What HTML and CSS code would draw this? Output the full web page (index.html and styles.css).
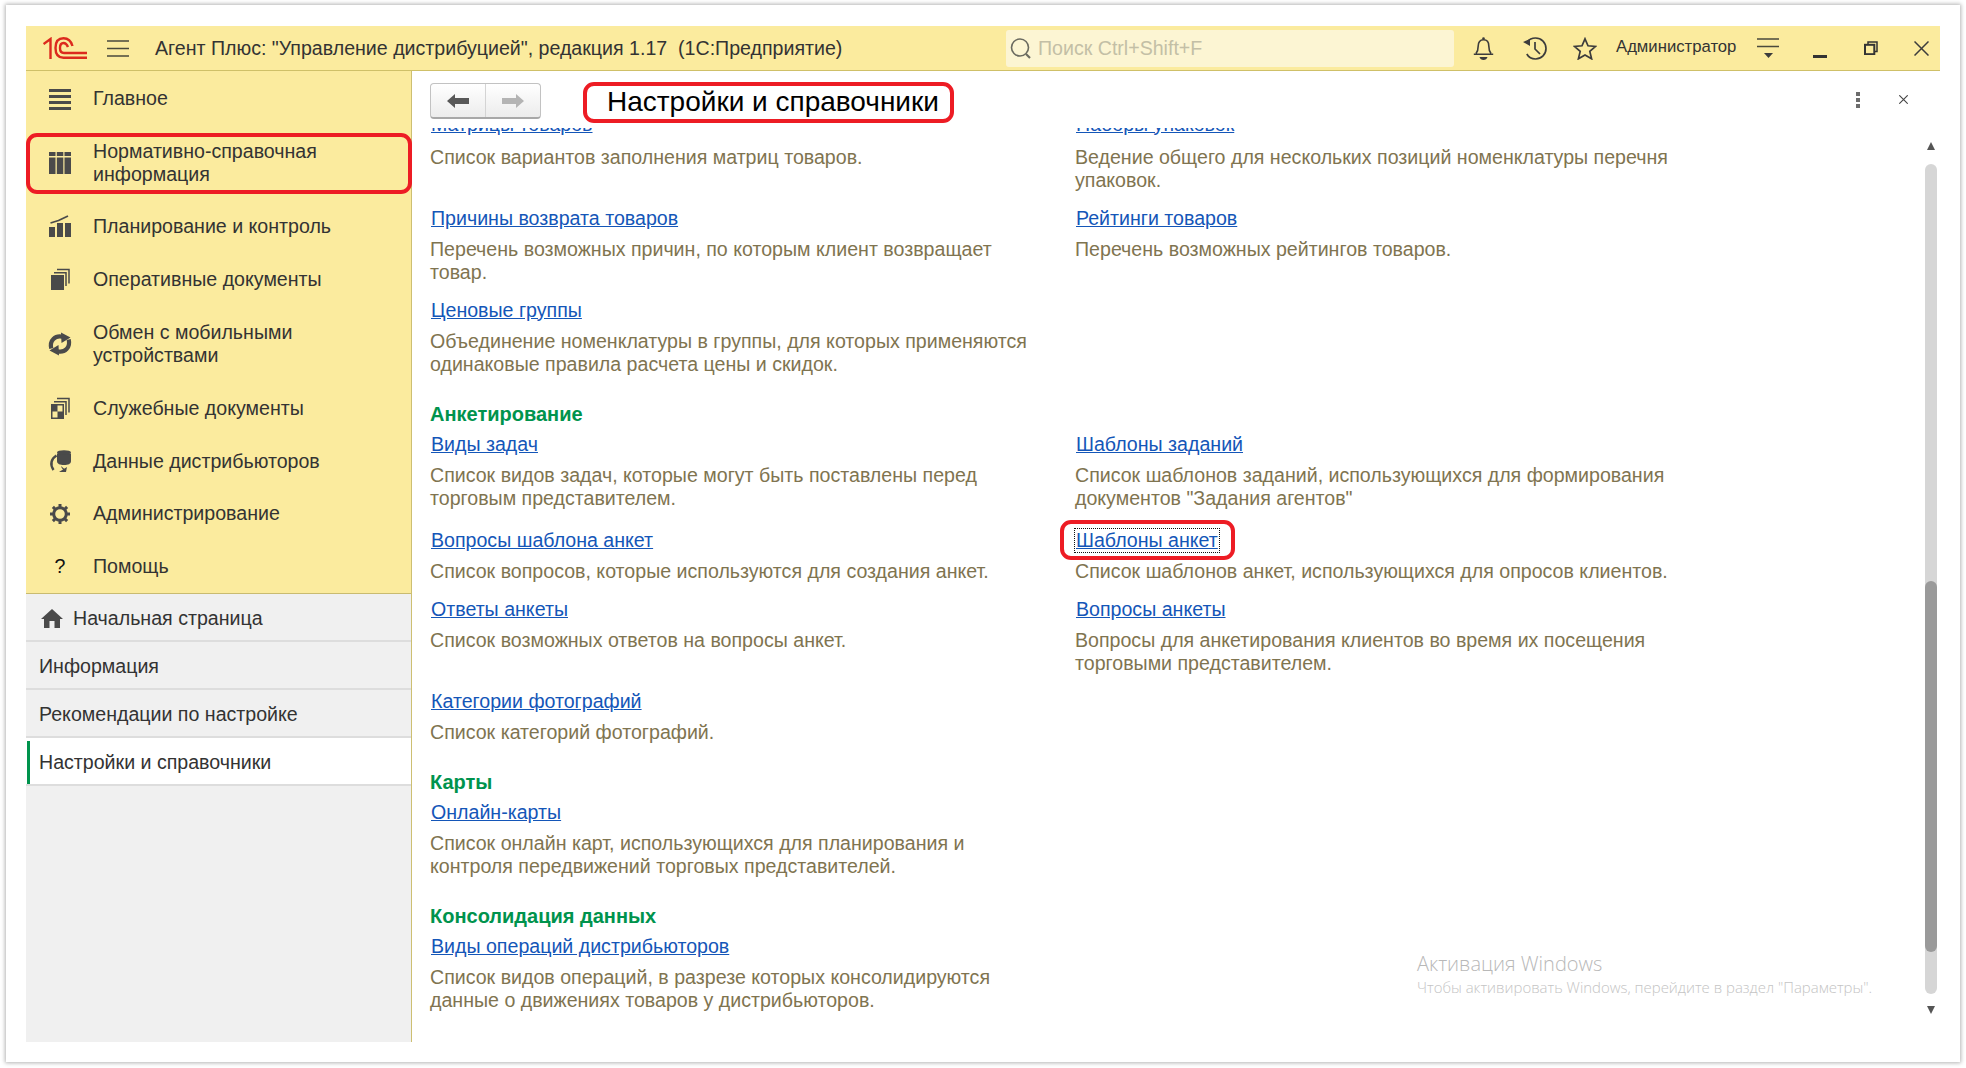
FILE: index.html
```html
<!DOCTYPE html>
<html lang="ru">
<head>
<meta charset="utf-8">
<title>Настройки и справочники</title>
<link rel="stylesheet" href="styles.css">
</head>
<body>
<div class="window">
  <div class="shell">
    <header class="appbar">
      <svg class="logo" viewBox="0 0 44 22"><g fill="none" stroke="#dc2a1e" stroke-width="2.4"><path d="M0.5 7 L7.5 2 V22"/><path d="M29.5 9 C28 3.500 25 1.200 20.500 1.200 C15 1.200 12.500 5 12.500 11 C12.500 17 15 20.800 20.500 20.800 H44"/><path d="M25 10 C24 7.500 22.500 6 20.500 6 C18 6 17 8 17 11 C17 14 18 16 21 16 H44"/></g></svg>
      <svg class="hamburger" viewBox="0 0 22 17"><path d="M0 1H22M0 8.500H22M0 16H22" stroke="#4a4a3c" stroke-width="1.500" fill="none"/></svg>
      <div class="app-title">Агент Плюс: "Управление дистрибуцией", редакция 1.17 &nbsp;(1С:Предприятие)</div>
      <div class="search">
        <svg class="search-icon" viewBox="0 0 22 21"><circle cx="10" cy="9.500" r="8.500" fill="none" stroke="#6b6b60" stroke-width="1.600"/><path d="M16 16L20 20" stroke="#6b6b60" stroke-width="2.200"/></svg>
        <span class="search-text">Поиск Ctrl+Shift+F</span>
      </div>
      <svg class="ic-bell" viewBox="0 0 21 23"><circle cx="10.500" cy="1.500" r="1.300" fill="#3c3c3c"/><path d="M3 16.500 C5 14 5.200 12 5.200 9 C5.200 5 7 2.800 10.500 2.800 C14 2.800 15.800 5 15.800 9 C15.800 12 16 14 18 16.500 M0.800 17.200 H20.200" fill="none" stroke="#3c3c3c" stroke-width="1.600"/><path d="M6.500 20 H14.500 C14 22 12.500 23 10.500 23 C8.500 23 7 22 6.500 20Z" fill="#3c3c3c"/></svg>
      <svg class="ic-history" viewBox="0 0 24 23"><path d="M4 5 C6 2.500 9 1 12.500 1 C18.500 1 23 5.700 23 11.500 C23 17.300 18.500 22 12.500 22 C8.500 22 5.500 20 3.800 17" fill="none" stroke="#3c3c3c" stroke-width="1.700"/><path d="M0 5 L7 2 L7 9Z" fill="#3c3c3c"/><path d="M12 5 V12 L17 17" fill="none" stroke="#3c3c3c" stroke-width="1.700"/></svg>
      <svg class="ic-star" viewBox="0 0 24 23"><path d="M12 1.800 L15 8.800 L22.600 9.400 L16.800 14.400 L18.600 21.800 L12 17.900 L5.400 21.800 L7.200 14.400 L1.400 9.400 L9 8.800Z" fill="none" stroke="#3c3c3c" stroke-width="1.700"/></svg>
      <span class="user">Администратор</span>
      <svg class="ic-filter" viewBox="0 0 22 20"><path d="M0 1H22M0 8.500H22" stroke="#4a4a3c" stroke-width="1.500" fill="none"/><path d="M7 15H16L11.500 20Z" fill="#3c3c3c"/></svg>
      <span class="ic-min"></span>
      <svg class="ic-restore" viewBox="0 0 14 14"><path d="M4 3.500V1H13V10.500H10.500" fill="none" stroke="#333" stroke-width="1.500"/><rect x="1" y="3.800" width="9.300" height="9.400" fill="none" stroke="#333" stroke-width="2"/></svg>
      <svg class="ic-close" viewBox="0 0 15 15"><path d="M0.500 0.500L14.500 14.500M14.500 0.500L0.500 14.500" stroke="#3c3c3c" stroke-width="1.500"/></svg>
    </header>
    <div class="main">
      <aside class="sidebar">
        <nav class="sections">
          <a class="section-item"><svg class="sec-icon" viewBox="0 0 22 22"><path d="M0 1h22v3H0zM0 7h22v3H0zM0 13h22v3H0zM0 19h22v3H0z"/></svg><span>Главное</span></a>
          <a class="section-item marked"><svg class="sec-icon" viewBox="0 0 22 22"><path d="M0 0h6.500v4H0zM0 5.500h6.500V22H0zM7.800 0h6.500v4H7.800zM7.800 5.500h6.500V22H7.800zM15.500 0H22v4h-6.500zM15.500 5.500H22V22h-6.500z"/></svg><span>Нормативно-справочная<br>информация</span></a>
          <a class="section-item"><svg class="sec-icon" viewBox="0 0 22 22"><path d="M0 12h6v10H0zM8 8h6v14H8zM16 8h6v14h-6z"/><path d="M1.500 8L9.500 5.500L19 1" fill="none" stroke="#4a4a4a" stroke-width="1.800"/></svg><span>Планирование и контроль</span></a>
          <a class="section-item"><svg class="sec-icon" viewBox="0 0 22 22"><path d="M2 7h13v15H2z"/><path d="M5 4.700H17V18M8 1.500H20V15.500" fill="none" stroke="#4a4a4a" stroke-width="1.500"/></svg><span>Оперативные документы</span></a>
          <a class="section-item section-tall"><svg class="sec-icon" viewBox="0 0 22 22"><path d="M2.300 15.500 C0.300 7.500 6 1.800 14 3.800 M19.700 6.500 C21.700 14.500 16 20.200 8 18.200" fill="none" stroke="#4a4a4a" stroke-width="4.200"/><path d="M12 -0.500L21.500 4.500L12.500 10ZM10 22.500L0.500 17.500L9.500 12Z"/></svg><span>Обмен с мобильными<br>устройствами</span></a>
          <a class="section-item"><svg class="sec-icon" viewBox="0 0 22 22"><path d="M2 7h13v15H2z"/><path d="M8.500 8.500h5v6h-5zM3.500 14.500h5v6h-5z" fill="#fbeb9e"/><path d="M5 4.700H17V18M8 1.500H20V15.500" fill="none" stroke="#4a4a4a" stroke-width="1.500"/></svg><span>Служебные документы</span></a>
          <a class="section-item"><svg class="sec-icon" viewBox="0 0 22 22"><path d="M8 3.500h14V11 C22 14 19 15 15 15 C11 15 8 14 8 11Z"/><ellipse cx="15" cy="2.500" rx="7" ry="2.300"/><path d="M7.500 5.500 C2.500 8.500 0.500 14 4.500 20" fill="none" stroke="#4a4a4a" stroke-width="2.400"/><path d="M12 16 C13 19 14 20 16 19.500 M10 22L17 22L18 17Z"/></svg><span>Данные дистрибьюторов</span></a>
          <a class="section-item"><svg class="sec-icon" viewBox="0 0 22 22"><circle cx="11" cy="11" r="6.300" fill="none" stroke="#4a4a4a" stroke-width="3"/><path d="M11 1V5M11 17V21M1 11H5M17 11H21M3.900 3.900L6.700 6.700M15.300 15.300L18.100 18.100M18.100 3.900L15.300 6.700M6.700 15.300L3.900 18.100" stroke="#4a4a4a" stroke-width="3"/></svg><span>Администрирование</span></a>
          <a class="section-item"><span class="sec-help">?</span><span>Помощь</span></a>
        </nav>
        <ul class="tabs">
          <li class="tab"><svg class="home-icon" viewBox="0 0 22 19"><path d="M11 0L22 10H19V19H13.500V12H8.500V19H3V10H0Z"/></svg>Начальная страница</li>
          <li class="tab">Информация</li>
          <li class="tab">Рекомендации по настройке</li>
          <li class="tab active">Настройки и справочники</li>
        </ul>
      </aside>
      <main class="page">
        <div class="toolbar">
          <div class="nav-buttons">
            <button class="nav-btn"><svg viewBox="0 0 22 14"><path d="M0 7L8 0V4H22V10H8V14Z" fill="#585858"/></svg></button>
            <button class="nav-btn"><svg viewBox="0 0 22 14"><path d="M22 7L14 0V4H0V10H14V14Z" fill="#b4b4b4"/></svg></button>
          </div>
          <h1 class="page-title">Настройки и справочники</h1>
          <svg class="ic-dots" viewBox="0 0 4 16"><path d="M0 0h4v4H0zM0 6h4v4H0zM0 12h4v4H0z" fill="#6c6c6c"/></svg>
          <svg class="ic-panel-close" viewBox="0 0 9 9"><path d="M0.300 0.300L8.700 8.700M8.700 0.300L0.300 8.700" stroke="#444" stroke-width="1.100"/></svg>
        </div>
        <div class="viewport">
          <div class="list">
            <div class="row row-first">
              <div class="entry"><a class="link">Матрицы товаров</a><p>Список вариантов заполнения матриц товаров.</p></div>
              <div class="entry"><a class="link">Наборы упаковок</a><p>Ведение общего для нескольких позиций номенклатуры перечня упаковок.</p></div>
            </div>
            <div class="row">
              <div class="entry"><a class="link">Причины возврата товаров</a><p>Перечень возможных причин, по которым клиент возвращает товар.</p></div>
              <div class="entry"><a class="link">Рейтинги товаров</a><p>Перечень возможных рейтингов товаров.</p></div>
            </div>
            <div class="row tight">
              <div class="entry"><a class="link">Ценовые группы</a><p>Объединение номенклатуры в группы, для которых применяются одинаковые правила расчета цены и скидок.</p></div>
            </div>
            <h2 class="group wide">Анкетирование</h2>
            <div class="row">
              <div class="entry"><a class="link">Виды задач</a><p>Список видов задач, которые могут быть поставлены перед торговым представителем.</p></div>
              <div class="entry"><a class="link">Шаблоны заданий</a><p>Список шаблонов заданий, использующихся для формирования документов "Задания агентов"</p></div>
            </div>
            <div class="row spaced">
              <div class="entry"><a class="link">Вопросы шаблона анкет</a><p>Список вопросов, которые используются для создания анкет.</p></div>
              <div class="entry"><a class="link focused">Шаблоны анкет<span class="red-frame"></span></a><p>Список шаблонов анкет, использующихся для опросов клиентов.</p></div>
            </div>
            <div class="row tight">
              <div class="entry"><a class="link">Ответы анкеты</a><p>Список возможных ответов на вопросы анкет.</p></div>
              <div class="entry"><a class="link">Вопросы анкеты</a><p>Вопросы для анкетирования клиентов во время их посещения торговыми представителем.</p></div>
            </div>
            <div class="row">
              <div class="entry"><a class="link">Категории фотографий</a><p>Список категорий фотографий.</p></div>
            </div>
            <h2 class="group">Карты</h2>
            <div class="row">
              <div class="entry"><a class="link">Онлайн-карты</a><p>Список онлайн карт, использующихся для планирования и контроля передвижений торговых представителей.</p></div>
            </div>
            <h2 class="group wide">Консолидация данных</h2>
            <div class="row">
              <div class="entry"><a class="link">Виды операций дистрибьюторов</a><p>Список видов операций, в разрезе которых консолидируются данные о движениях товаров у дистрибьюторов.</p></div>
            </div>
          </div>
          <div class="watermark">
            <div class="wm-title">Активация Windows</div>
            <div class="wm-text">Чтобы активировать Windows, перейдите в раздел "Параметры".</div>
          </div>
          <div class="scrollbar">
            <span class="sb-up"></span>
            <div class="sb-track"><div class="sb-thumb"></div></div>
            <span class="sb-down"></span>
          </div>
        </div>
      </main>
    </div>
  </div>
</div>
</body>
</html>
```
FILE: styles.css
```css
* { box-sizing: border-box; }
html, body { margin: 0; height: 100%; }
body {
  background: #fff;
  padding: 5px 6px 6px;
  font: 19.600px/23px "Liberation Sans", Arial, sans-serif;
  color: #333;
  overflow: hidden;
}
.window {
  width: 1954px;
  height: 1057px;
  padding: 21px 20px 20px;
  background: #fff;
  box-shadow: 0 0 4px 1px #b4b4b4;
}
.shell { height: 100%; display: flex; flex-direction: column; }

/* app bar */
.appbar {
  height: 45px;
  flex: none;
  display: flex;
  align-items: center;
  padding-right: 11px;
  background: #fbeb9e;
  border-bottom: 1px solid #cfc068;
}
.logo { width: 44px; height: 22px; margin-left: 17px; flex: none; }
.hamburger { width: 22px; height: 17px; margin-left: 20px; flex: none; }
.app-title { margin-left: 26px; flex: 1; color: #333; white-space: nowrap; }
.search {
  width: 448px;
  height: 37px;
  flex: none;
  display: flex;
  align-items: center;
  gap: 6px;
  padding-left: 4px;
  background: #fcf5d3;
  border-radius: 3px;
}
.search-icon { width: 22px; height: 21px; }
.search-text { color: #c3bfa6; }
.ic-bell { width: 21px; height: 23px; margin-left: 19px; flex: none; }
.ic-history { width: 24px; height: 23px; margin-left: 29px; flex: none; }
.ic-star { width: 24px; height: 23px; margin-left: 26px; flex: none; }
.user { width: 122px; margin: -3px 0 0 19px; font-size: 16.700px; flex: none; color: #333; white-space: nowrap; }
.ic-filter { width: 22px; height: 20px; margin-left: 19px; flex: none; }
.ic-min { width: 14px; height: 2.500px; margin: 17px 0 0 34px; background: #333; flex: none; }
.ic-restore { width: 14px; height: 14px; margin-left: 37px; flex: none; }
.ic-close { width: 15px; height: 15px; margin-left: 36px; flex: none; }

/* main */
.main { flex: 1; min-height: 0; display: flex; }
.sidebar {
  width: 386px;
  flex: none;
  display: flex;
  flex-direction: column;
  background: #f0f0f0;
  border-right: 1px solid #cdbf72;
}
.sections {
  padding: 1.650px 0 0.500px;
  background: #fbeb9e;
  border-bottom: 1px solid #c9bb70;
}
.section-item {
  position: relative;
  display: flex;
  align-items: center;
  gap: 22px;
  padding: 14.850px 0 14.850px 23px;
  color: #333;
}
.section-item.marked { padding-bottom: 13.850px; }
.section-item.section-tall { padding-top: 15.850px; }
.marked::after {
  content: "";
  position: absolute;
  top: 8px;
  bottom: 6px;
  left: 0;
  right: -1px;
  border: 4px solid #ed1c24;
  border-radius: 11px;
}
.sec-icon { width: 22px; height: 22px; flex: none; fill: #4a4a4a; overflow: visible; }
.sec-help { width: 22px; flex: none; text-align: center; color: #111; }
.tabs { margin: 0; padding: 0; list-style: none; }
.tab {
  position: relative;
  height: 48px;
  display: flex;
  align-items: center;
  padding: 2px 0 0 13px;
  border-bottom: 2px solid #dddddd;
  color: #333;
}
.tab:first-child { padding-left: 15px; }
.tab.active { background: #fff; }
.tab.active::before {
  content: "";
  position: absolute;
  left: 1px;
  top: 3px;
  bottom: 0;
  width: 3px;
  background: #00934d;
}
.home-icon { width: 22px; height: 19px; margin-right: 10px; fill: #4a4a4a; }

/* page */
.page { flex: 1; min-width: 0; display: flex; flex-direction: column; background: #fff; }
.toolbar {
  height: 57px;
  flex: none;
  display: flex;
  align-items: flex-start;
  padding: 12px 0 0 18px;
}
.nav-buttons {
  width: 111px;
  height: 36px;
  display: flex;
  flex: none;
  border: 1px solid #c2c2c2;
  border-bottom: 2px solid #a8a8a8;
  border-radius: 4px;
  background: linear-gradient(#ffffff, #ececec);
}
.nav-btn {
  width: 50%;
  padding: 0;
  border: 0;
  background: none;
  display: flex;
  align-items: center;
  justify-content: center;
}
.nav-btn:first-child { border-right: 1px solid #d4d4d4; }
.nav-btn svg { width: 22px; height: 14px; }
.page-title {
  width: 371px;
  height: 41px;
  margin: -1px 0 0 42px;
  padding-left: 20px;
  border: 4px solid #ed1c24;
  border-radius: 11px;
  font: 400 28px/31px "Liberation Sans", Arial, sans-serif;
  color: #000;
  white-space: nowrap;
  flex: none;
}
.ic-dots { width: 4px; height: 16px; margin: 9px 0 0 auto; flex: none; }
.ic-panel-close { width: 9px; height: 9px; margin: 12px 32px 0 39px; flex: none; }

.viewport { position: relative; flex: 1; min-height: 0; overflow: hidden; }
.list { margin-top: -13.500px; padding-left: 18px; }
.row { display: grid; grid-template-columns: 605px 605px; column-gap: 40px; }
.row.spaced { margin-top: 3.500px; }
.row.tight { margin-top: -1px; }
.entry { padding-bottom: 15.500px; }
.entry p { margin: 8px 0 0; color: #7f7450; }
.row-first .link { margin-top: -2px; }
.row-first .entry p { margin-top: 8px; }
.link {
  position: relative;
  display: inline-block;
  vertical-align: top;
  padding: 0 1px;
  color: #1456b8;
  text-decoration: underline;
}
.focused { outline: 1px dotted #111; outline-offset: 0; }
.red-frame {
  position: absolute;
  left: -15px;
  right: -16px;
  top: -9px;
  bottom: -8px;
  border: 4px solid #ed1c24;
  border-radius: 11px;
}
.group {
  margin: 11px 0 7px;
  font: 700 20px/23px "Liberation Sans", Arial, sans-serif;
  color: #00934d;
}
.group.wide { margin-top: 12px; }

.watermark {
  position: absolute;
  left: 1005px;
  top: 822px;
  font-family: "Open Sans", sans-serif;
  white-space: nowrap;
  pointer-events: none;
}
.wm-title { font-size: 20px; line-height: 27px; font-weight: 300; color: #b8b8b8; }
.wm-text { font-size: 14.950px; line-height: 20px; font-weight: 300; color: #c4c4c4; }

.scrollbar {
  position: absolute;
  right: 3px;
  top: 14px;
  bottom: 28px;
  width: 12px;
  display: flex;
  flex-direction: column;
  align-items: center;
}
.sb-up, .sb-down {
  flex: none;
  width: 0;
  height: 0;
  border-left: 4px solid transparent;
  border-right: 4px solid transparent;
}
.sb-up { border-bottom: 8px solid #555; }
.sb-down { border-top: 8px solid #555; }
.sb-track {
  flex: 1;
  width: 12px;
  margin: 14px 0 12px;
  padding-top: 417px;
  background: #d6d6d6;
  border-radius: 6px;
  display: flex;
  flex-direction: column;
}
.sb-thumb { height: 371px; background: #9a9a9a; border-radius: 6px; }
```
